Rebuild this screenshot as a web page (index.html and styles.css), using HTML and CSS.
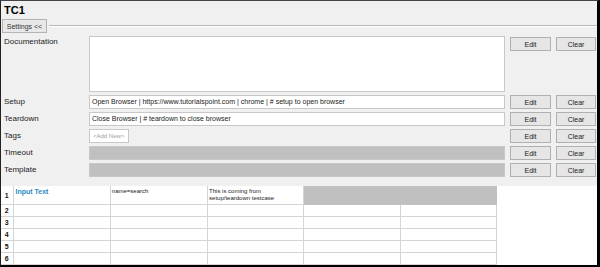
FILE: index.html
```html
<!DOCTYPE html>
<html>
<head>
<meta charset="utf-8">
<link rel="stylesheet" href="styles.css">
</head>
<body>
<div class="app">
  <div class="title">TC1</div>
  <div class="settings-row">
    <button class="settings-btn">Settings &lt;&lt;</button>
    <div class="rule"></div>
  </div>
  <div class="fields">
    <div class="field-row doc">
      <div class="label">Documentation</div>
      <div class="box textarea"></div>
      <button class="btn edit">Edit</button>
      <button class="btn clear">Clear</button>
    </div>
    <div class="field-row">
      <div class="label">Setup</div>
      <div class="box">Open Browser | https://www.tutorialspoint.com | chrome | # setup to open browser</div>
      <button class="btn edit">Edit</button>
      <button class="btn clear">Clear</button>
    </div>
    <div class="field-row">
      <div class="label">Teardown</div>
      <div class="box">Close Browser | # teardown to close browser</div>
      <button class="btn edit">Edit</button>
      <button class="btn clear">Clear</button>
    </div>
    <div class="field-row">
      <div class="label">Tags</div>
      <div class="tagwrap"><span class="tag">&lt;Add New&gt;</span></div>
      <button class="btn edit">Edit</button>
      <button class="btn clear">Clear</button>
    </div>
    <div class="field-row">
      <div class="label">Timeout</div>
      <div class="box disabled"></div>
      <button class="btn edit">Edit</button>
      <button class="btn clear">Clear</button>
    </div>
    <div class="field-row">
      <div class="label">Template</div>
      <div class="box disabled"></div>
      <button class="btn edit">Edit</button>
      <button class="btn clear">Clear</button>
    </div>
  </div>
  <div class="grid-area">
    <table class="grid">
      <colgroup>
        <col class="c-num">
        <col class="c-cell">
        <col class="c-cell">
        <col class="c-cell2">
        <col class="c-cell2">
        <col class="c-cell2">
      </colgroup>
      <tr class="r1">
        <th>1</th>
        <td class="kw">Input Text</td>
        <td>name=search</td>
        <td>This is coming from<br>setup/teardown testcase</td>
        <td class="gray"></td>
        <td class="gray"></td>
      </tr>
      <tr><th>2</th><td></td><td></td><td></td><td></td><td></td></tr>
      <tr><th>3</th><td></td><td></td><td></td><td></td><td></td></tr>
      <tr><th>4</th><td></td><td></td><td></td><td></td><td></td></tr>
      <tr><th>5</th><td></td><td></td><td></td><td></td><td></td></tr>
      <tr><th>6</th><td></td><td></td><td></td><td></td><td></td></tr>
    </table>
  </div>
</div>
</body>
</html>
```
FILE: styles.css
```css
html, body {
  margin: 0;
  padding: 0;
  background: #ffffff;
}
.app {
  width: 600px;
  height: 267px;
  box-sizing: border-box;
  border-left: 1px solid #222;
  border-top: 1px solid #444;
  border-right: 3px solid #000;
  border-bottom: 2px solid #000;
  background: #f0f0f0;
  font-family: "Liberation Sans", Arial, sans-serif;
  font-size: 8px;
  color: #222;
  display: flex;
  flex-direction: column;
  overflow: hidden;
}
.title {
  font-weight: bold;
  font-size: 11px;
  color: #000;
  padding: 3px 0 0 3px;
  height: 16px;
  box-sizing: border-box;
}
.settings-row {
  display: flex;
  align-items: center;
  margin-top: 3px;
  padding-left: 1px;
}
.settings-btn {
  font-family: inherit;
  font-size: 7px;
  color: #333;
  background: #e8e8e8;
  border: 1px solid #b4b4b4;
  height: 14px;
  width: 45px;
  padding: 0;
  margin: 0;
}
.rule {
  flex: 1;
  height: 0;
  border-top: 1px solid #b8b8b8;
  border-bottom: 1px solid #fff;
  margin-left: 2px;
}
.fields {
  display: flex;
  flex-direction: column;
  gap: 3px;
  margin-top: 3px;
}
.field-row {
  display: flex;
  align-items: flex-start;
  height: 14px;
}
.field-row.doc {
  height: 56px;
}
.label {
  width: 85px;
  padding-left: 3px;
  padding-top: 2px;
  flex: none;
  color: #222;
}
.doc .label {
  padding-top: 1px;
}
.box {
  width: 416px;
  height: 14px;
  box-sizing: border-box;
  background: #fff;
  border: 1px solid #c8c8c8;
  padding: 2px 0 0 2px;
  white-space: nowrap;
  overflow: hidden;
  flex: none;
  font-size: 7px;
}
.box.textarea {
  height: 56px;
}
.box.disabled {
  background: #c0c0c0;
  border-color: #c8c8c8;
}
.tagwrap {
  width: 416px;
  flex: none;
  height: 14px;
}
.tag {
  display: inline-block;
  width: 40px;
  height: 14px;
  box-sizing: border-box;
  border: 1px solid #c8c8c8;
  background: #fff;
  color: #a0a0a0;
  font-size: 6px;
  padding: 3px 0 0 3px;
  white-space: nowrap;
  overflow: hidden;
}
.btn {
  font-family: inherit;
  font-size: 7px;
  color: #222;
  background: #e6e6e6;
  border: 1px solid #b0b0b0;
  height: 14px;
  width: 41px;
  padding: 0;
  margin: 0 0 0 5px;
  flex: none;
}
.btn.clear {
  width: 40px;
}
.doc .btn {
  margin-top: 1px;
}
.grid-area {
  margin-top: 9px;
  flex: 1;
  background: #fff;
}
.grid {
  border-collapse: collapse;
  table-layout: fixed;
  width: 496px;
}
.c-num { width: 12px; }
.c-cell { width: 97px; }
.c-cell2 { width: 96px; }
.grid th {
  font-size: 7px;
  font-weight: bold;
  color: #111;
  text-align: center;
  border: 1px solid #d4d4d4;
  border-left: none;
  padding: 0;
}
.grid td {
  height: 11px;
  border: 1px solid #d4d4d4;
  padding: 0 0 0 1px;
  vertical-align: top;
  font-size: 6px;
  line-height: 7px;
  color: #222;
  white-space: nowrap;
  overflow: hidden;
}
.grid tr.r1 td, .grid tr.r1 th {
  height: 16px;
}
.grid tr.r1 td {
  padding-top: 2px;
}
.grid td.kw {
  color: #2a8cc0;
  font-weight: bold;
  font-size: 7px;
  padding-left: 2px;
}
.grid td.gray {
  background: #c0c0c0;
  border-color: #c0c0c0;
}
.grid tr:first-child th, .grid tr:first-child td {
  border-top: none;
}
```
